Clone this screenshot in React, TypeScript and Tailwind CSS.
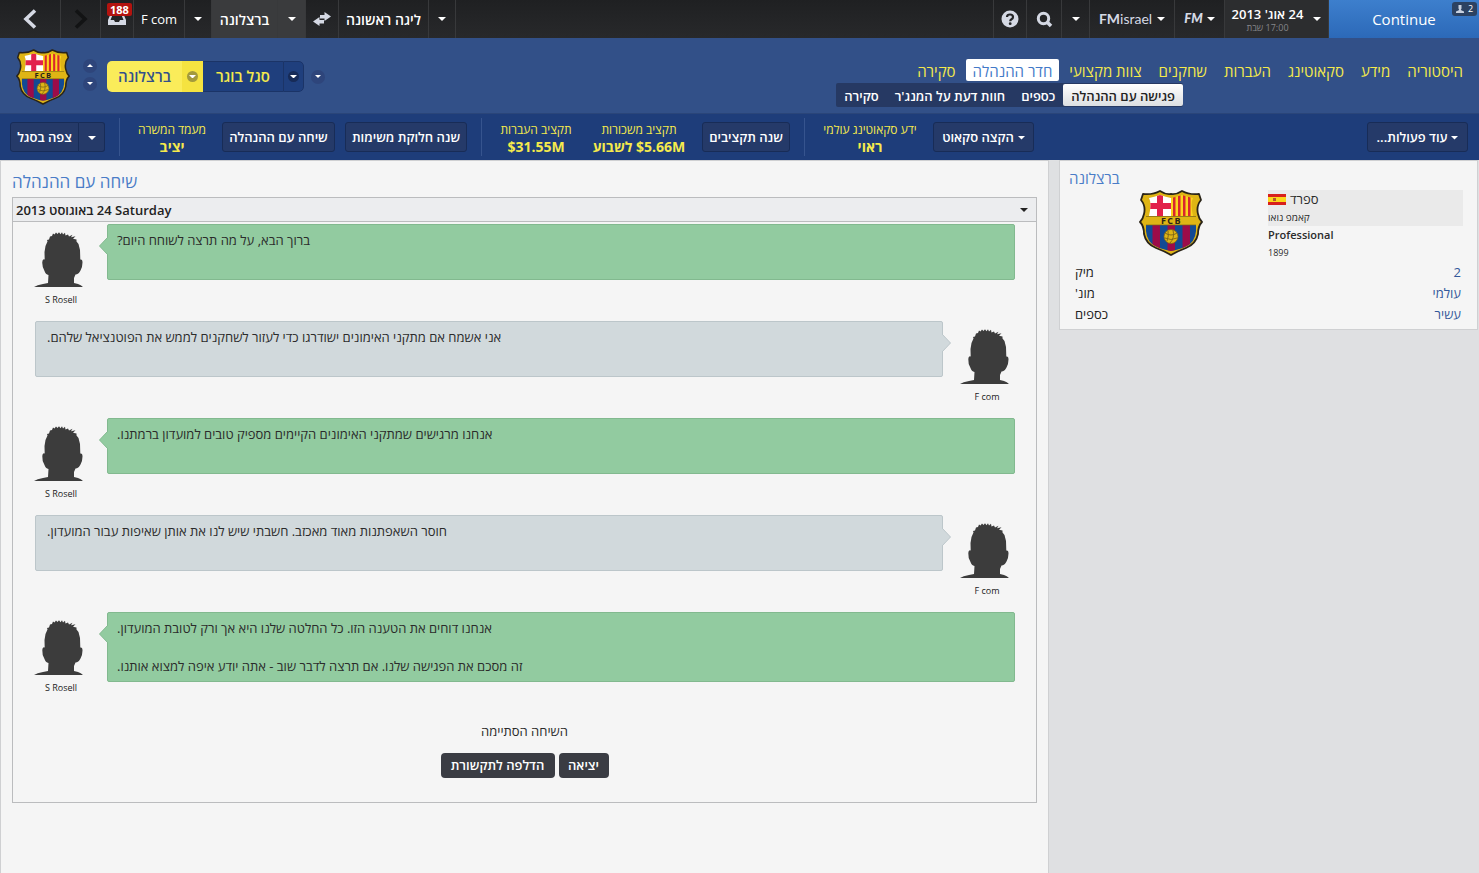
import type { ReactNode } from 'react';

type Speaker = 'rosell' | 'fcom';

interface Message {
  from: Speaker;
  lines: string[];
}

const MESSAGES: Message[] = [
  { from: 'rosell', lines: ['ברוך הבא, על מה תרצה לשוחח היום?'] },
  { from: 'fcom', lines: ['אני אשמח אם מתקני האימונים ישודרגו כדי לעזור לשחקנים לממש את הפוטנציאל שלהם.'] },
  { from: 'rosell', lines: ['אנחנו מרגישים שמתקני האימונים הקיימים מספיק טובים למועדון ברמתנו.'] },
  { from: 'fcom', lines: ['חוסר השאפתנות מאוד מאכזב. חשבתי שיש לנו את אותן שאיפות עבור המועדון.'] },
  {
    from: 'rosell',
    lines: [
      'אנחנו דוחים את הטענה הזו. כל החלטה שלנו היא אך ורק לטובת המועדון.',
      '',
      'זה מסכם את הפגישה שלנו. אם תרצה לדבר שוב - אתה יודע איפה למצוא אותנו.',
    ],
  },
];

const TABS = ['סקירה', 'חדר ההנהלה', 'צוות מקצועי', 'שחקנים', 'העברות', 'סקאוטינג', 'מידע', 'היסטוריה'];
const SUB_TABS = ['סקירה', 'חוות דעת על המנג\'ר', 'כספים', 'פגישה עם ההנהלה'];

const FACTS = [
  { label: 'מיק', value: '2' },
  { label: 'מונ\'', value: 'עולמי' },
  { label: 'כספים', value: 'עשיר' },
];

function Caret({ up = false, className = 'w-2' }: { up?: boolean; className?: string }) {
  return (
    <svg viewBox="0 0 8 4" className={className} fill="currentColor" aria-hidden="true">
      <path d={up ? 'M0 4L4 0L8 4Z' : 'M0 0H8L4 4Z'} />
    </svg>
  );
}

function Crest({ className }: { className: string }) {
  return (
    <svg viewBox="0 0 64 66" className={className} role="img" aria-label="FCB">
      <defs>
        <clipPath id="crest-top">
          <path d="M10 8Q15 7 21 5Q27 7 32 8Q37 7 43 5Q49 7 54 8Q51 13 54 26H10Q13 13 10 8Z" />
        </clipPath>
        <clipPath id="crest-bottom">
          <path d="M7 35H57Q58 48 51 54Q44 59 32 61Q20 59 13 54Q6 48 7 35Z" />
        </clipPath>
      </defs>
      <path
        d="M4 4Q14 5 21 1Q27 5 32 4Q37 5 43 1Q50 5 60 4L62 10Q57 16 59 24Q60 29 63 32Q59 36 59 44Q57 54 47 58Q39 61 32 65Q25 61 17 58Q7 54 5 44Q5 36 1 32Q4 29 5 24Q7 16 2 10Z"
        fill="#dfb515"
        stroke="#2a2418"
        strokeWidth="1.8"
        strokeLinejoin="round"
      />
      <g clipPath="url(#crest-top)">
        <path d="M8 3H32V26H8Z" fill="#fff" />
        <path d="M18 3H24V26H18ZM8 13H32V19H8Z" fill="#e2214b" />
        <path d="M32 3H56V26H32Z" fill="#fbd51d" />
        <path d="M34 3H36.500V26H34ZM39 3H41.500V26H39ZM44 3H46.500V26H44ZM49 3H51.500V26H49Z" fill="#d9262e" />
      </g>
      <g clipPath="url(#crest-bottom)">
        <path d="M5 35H59V62H5Z" fill="#124a94" />
        <path d="M13.500 35H21V62H13.500ZM28.500 35H36V62H28.500ZM43.500 35H51V62H43.500Z" fill="#9c0c49" />
      </g>
      <path d="M7 26.500H57M7 35H57" stroke="#7a6418" strokeWidth=".7" />
      <text x="32.500" y="34" textAnchor="middle" fontSize="9" fontWeight="700" letterSpacing="1.500" fill="#2a2418">
        FCB
      </text>
      <circle cx="32" cy="46.500" r="7" fill="#dfb515" stroke="#7a6418" strokeWidth=".8" />
      <path d="M26 43Q32 47 38 43M28 51Q30 46 29 41M31 53Q36 48 34 40M26 48Q32 51 38 48" fill="none" stroke="#7a6418" strokeWidth=".9" />
    </svg>
  );
}

function Silhouette() {
  return (
    <svg viewBox="0 0 55 55" className="h-[55px] w-[55px] shrink-0" fill="#3c3c3c" aria-hidden="true">
      <path d="M0 55Q3 53 9 52L14 51L14.500 43Q11.500 42.500 10.500 39Q8 35 8.300 30Q8.500 26.500 10.700 27.500L10.500 20L11.500 14L13.500 9.500L13 8L15 7.500L16 4.500L18 4L19 1.500L20.500 2.500L22 .5L23.500 2L25 .3L26.500 2.200L28 .2L29 2.500L31 .8L31.500 3.500L34 2.600L35 4.500L38.500 2.800L37 5.200L41.500 4.300L39 6.800L42.500 7.500L42.500 9.500L44.500 12L46 18L46.300 27.500Q48.500 27 48.500 30.500Q48.500 35 46.500 38.500Q44.500 42.500 41.500 42.500L40 46V51L44 52Q47 53 49 55Z" />
    </svg>
  );
}

function Spain() {
  return (
    <svg viewBox="0 0 18 11" className="h-[11px] w-[18px]" aria-hidden="true">
      <path d="M0 0H18V11H0Z" fill="#d8201c" />
      <path d="M0 3H18V8H0Z" fill="#fbd71c" />
      <path d="M5 4H8V7H5Z" fill="#b5562a" />
    </svg>
  );
}

function BarCell({ children, className, label }: { children: ReactNode; className: string; label?: string }) {
  return (
    <button
      type="button"
      aria-label={label}
      className={`flex h-full shrink-0 items-center justify-center border-r border-[#38393b] text-white ${className}`}
    >
      {children}
    </button>
  );
}

function ActionButton({ children, className = '', label }: { children: ReactNode; className?: string; label?: string }) {
  return (
    <button
      type="button"
      dir="rtl"
      aria-label={label}
      className={`flex h-[30px] shrink-0 items-center justify-center gap-1 rounded-[3px] border border-[#182c57] bg-[#253a69] pt-[2px] text-[13px] font-semibold whitespace-nowrap text-white ${className}`}
    >
      {children}
    </button>
  );
}

function Stat({ label, value, className }: { label: string; value: string; className: string }) {
  return (
    <dl dir="rtl" className={`flex shrink-0 flex-col pt-[2px] text-center whitespace-nowrap text-[#f5ea4c] ${className}`}>
      <dt className="text-[12px] leading-[17px]">{label}</dt>
      <dd className="text-[14px] leading-[18px] font-bold">{value}</dd>
    </dl>
  );
}

function Divider() {
  return <span className="mx-[14px] h-[38px] w-px shrink-0 bg-[#36548e]" />;
}

function TopBar() {
  return (
    <div className="flex h-[38px] bg-linear-to-b from-[#1f2022] to-[#28292b]">
      <BarCell label="Back" className="w-[61px]">
        <svg viewBox="0 0 14 20" className="h-5 w-[14px]" fill="none" stroke="#d5d9e4" strokeWidth="3.600" aria-hidden="true">
          <path d="M12 1.500L3 10L12 18.500" />
        </svg>
      </BarCell>
      <BarCell label="Forward" className="w-10">
        <svg viewBox="0 0 14 20" className="h-5 w-[14px]" fill="none" stroke="#121314" strokeWidth="3.600" aria-hidden="true">
          <path d="M2 1.500L11 10L2 18.500" />
        </svg>
      </BarCell>
      <BarCell label="Inbox" className="relative w-[33px]">
        <svg viewBox="0 0 18 12" className="h-3 w-[18px]" fill="#d5d9e4" aria-hidden="true">
          <path fillRule="evenodd" d="M3 0H15L18 7V12H0V7ZM4.500 2L2.500 7H6L7 9H11L12 7H15.500L13.500 2Z" />
        </svg>
        <span className="absolute top-[3px] left-[6px] rounded-[2px] bg-[#b3130f] px-[3px] text-[11px] leading-[13px] font-bold">
          188
        </span>
      </BarCell>
      <BarCell className="w-[51px] pt-px text-[13px] font-medium">F com</BarCell>
      <BarCell label="Manager menu" className="w-[27px]"><Caret /></BarCell>
      <BarCell className="w-[66px] bg-[#3a3b3d] pt-px text-[14px] font-semibold">ברצלונה</BarCell>
      <BarCell label="Club menu" className="w-[28px] bg-[#3a3b3d]"><Caret /></BarCell>
      <BarCell label="Switch" className="w-[33px]">
        <svg viewBox="0 0 18 14" className="h-[14px] w-[18px]" fill="#d5d9e4" aria-hidden="true">
          <path d="M11.500 0L18 4.500L11.500 9V6.500H7V3H11.500ZM6.500 5L0 9.500L6.500 14V11.500H11V8H6.500Z" />
        </svg>
      </BarCell>
      <BarCell className="w-[90px] pt-px text-[14px] font-semibold">ליגה ראשונה</BarCell>
      <BarCell label="League menu" className="w-[27px]"><Caret /></BarCell>

      <div className="ml-auto flex border-l border-[#38393b]">
        <BarCell label="Help" className="w-[33px]">
          <svg viewBox="0 0 18 18" className="h-[18px] w-[18px]" aria-hidden="true">
            <circle cx="9" cy="9" r="8.500" fill="#d5d9e4" />
            <path d="M6 7Q6 4.500 9 4.500Q12 4.500 12 7Q12 8.500 10.500 9.300Q9.200 10 9.200 11.300" fill="none" stroke="#232426" strokeWidth="2.200" />
            <circle cx="9.200" cy="13.700" r="1.400" fill="#232426" />
          </svg>
        </BarCell>
        <BarCell label="Search" className="w-[35px]">
          <svg viewBox="0 0 17 17" className="h-[17px] w-[17px]" fill="none" stroke="#d5d9e4" aria-hidden="true">
            <circle cx="7.500" cy="7.500" r="5.200" strokeWidth="3" />
            <path d="M10.500 10.500L15 15" strokeWidth="3.600" />
          </svg>
        </BarCell>
        <BarCell label="Search menu" className="w-7"><Caret /></BarCell>
        <BarCell className="w-[85px] gap-[5px]">
          <span className="font-[Lato] text-[14px] leading-[18px] text-[#d5d9e4]">
            <b>FM</b>israel
          </span>
          <Caret />
        </BarCell>
        <BarCell className="w-[50px] gap-1">
          <span className="font-[Lato] text-[13px] font-black text-[#d5d9e4] italic">FM</span>
          <Caret />
        </BarCell>
        <BarCell className="w-[104px] gap-[10px] bg-[#2c2d2f]">
          <span dir="rtl" className="flex flex-col items-center pt-[2px] whitespace-nowrap">
            <span className="text-[13px] leading-[16px] font-semibold">24 אוג' 2013</span>
            <span className="text-[9px] leading-[12px] text-[#85868a]">17:00 שבת</span>
          </span>
          <Caret />
        </BarCell>
        <button
          type="button"
          className="relative w-[150px] bg-linear-to-b from-[#3d7fcd] to-[#2c69b8] text-[15px] font-medium text-white"
        >
          Continue
          <span className="absolute top-[2px] right-[2px] flex h-[14px] w-[25px] items-center justify-center gap-1 rounded-[3px] bg-[#2c4262] text-[9px]">
            <svg viewBox="0 0 8 8" className="h-2 w-2" fill="#c9d2e0" aria-hidden="true">
              <path d="M2.500 0H5.500V3.500L4.800 5L8 6.500V8H0V6.500L3.200 5L2.500 3.500Z" />
            </svg>
            2
          </span>
        </button>
      </div>
    </div>
  );
}

function RoundCaret({ up = false, label }: { up?: boolean; label: string }) {
  return (
    <button type="button" aria-label={label} className="flex h-[14px] w-[14px] items-center justify-center rounded-full bg-[#2e457b] text-white">
      <Caret up={up} className="w-[6px]" />
    </button>
  );
}

function ClubHeader() {
  return (
    <div className="flex h-[75px] bg-[#325088]">
      <div className="flex h-full items-center pt-[2px] pl-4">
        <Crest className="h-[56px] w-[54px]" />
        <div className="ml-[13px] flex flex-col gap-1 pb-1">
          <RoundCaret up label="Previous club" />
          <RoundCaret label="Next club" />
        </div>
        <div className="mr-[7px] ml-[10px] flex h-[31px] overflow-hidden rounded-[5px] text-[15px] font-semibold">
          <button type="button" className="w-[75px] bg-[#faec5a] text-[#33508a]">ברצלונה</button>
          <button type="button" aria-label="Club list" className="flex w-[21px] items-center justify-center bg-[#f5e340] text-white">
            <span className="flex h-[11px] w-[11px] items-center justify-center rounded-full bg-[#a39a3c]">
              <Caret className="w-[7px]" />
            </span>
          </button>
          <button type="button" className="w-[80px] border border-r-0 border-l-0 border-[#1b3467] bg-[#1f3f7d] text-[#f5ea4c]">סגל בוגר</button>
          <button type="button" aria-label="Squad list" className="flex w-[21px] items-center justify-center rounded-r-[5px] border border-[#1b3467] bg-[#1f3f7d] text-white">
            <span className="flex h-[11px] w-[11px] items-center justify-center rounded-full bg-[#172b57]">
              <Caret className="w-[7px]" />
            </span>
          </button>
        </div>
        <RoundCaret label="More" />
      </div>

      <div className="ml-auto flex flex-col items-end pt-[21px]">
        <nav className="flex gap-[3px] pr-[9px]">
          {TABS.map((tab, i) => (
            <a
              key={tab}
              href="#"
              className={`rounded-[2px] px-[7px] pt-[2px] text-[15px] leading-[20px] whitespace-nowrap ${
                i === 1 ? 'bg-white text-[#4279c8]' : 'text-[#f5ea4c]'
              }`}
            >
              {tab}
            </a>
          ))}
        </nav>
        <nav className="mt-[2px] mr-[296px] flex rounded-[2px] bg-[#263963] py-px">
          {SUB_TABS.map((tab, i) => (
            <a
              key={tab}
              href="#"
              dir="rtl"
              className={`rounded-[2px] px-2 pt-[2px] text-[13px] leading-[20px] font-semibold whitespace-nowrap ${
                i === 3 ? 'bg-linear-to-b from-white to-[#dcdfe2] text-[#222]' : 'text-white'
              }`}
            >
              {tab}
            </a>
          ))}
        </nav>
      </div>
    </div>
  );
}

function ActionBar() {
  return (
    <div className="flex h-[47px] items-center border-t border-[#2a4579] bg-[#1e3d7a] pr-[11px] pl-[10px]">
      <div className="flex">
        <ActionButton className="w-[69px] rounded-r-none">צפה בסגל</ActionButton>
        <ActionButton label="Squad menu" className="w-[26px] rounded-l-none border-l-0"><Caret /></ActionButton>
      </div>
      <Divider />
      <Stat className="w-[76px]" label="מעמד המשרה" value="יציב" />
      <ActionButton className="ml-3 w-[113px]">שיחה עם ההנהלה</ActionButton>
      <ActionButton className="ml-[10px] w-[122px]">שנה חלוקת משימות</ActionButton>
      <Divider />
      <Stat className="w-[80px]" label="תקציב העברות" value="$31.55M" />
      <Stat className="ml-3 w-[102px]" label="תקציב משכורות" value="$5.66M לשבוע" />
      <ActionButton className="ml-3 w-[88px]">שנה תקציבים</ActionButton>
      <Divider />
      <Stat className="w-[102px]" label="ידע סקאוטינג עולמי" value="ראוי" />
      <ActionButton className="ml-3 w-[101px]"><Caret className="w-[7px]" />הקצה סקאוט</ActionButton>
      <ActionButton className="ml-auto w-[101px]"><Caret className="w-[7px]" />עוד פעולות...</ActionButton>
    </div>
  );
}

function Bubble({ message }: { message: Message }) {
  const mine = message.from === 'fcom';
  return (
    <li className={`flex min-h-[97px] ${mine ? 'flex-row-reverse' : ''}`}>
      <div className={`flex w-[72px] shrink-0 flex-col items-center pt-2 ${mine ? 'pl-4' : 'pr-5'}`}>
        <Silhouette />
        <span className="mt-[5px] text-[9px] leading-4 text-[#222]">{mine ? 'F com' : 'S Rosell'}</span>
      </div>
      <div
        className={`relative min-h-[56px] flex-1 self-start rounded-[2px] border px-[9px] pt-[6px] pb-[5px] text-[13px] leading-[19px] text-[#2b2b2b] ${
          mine ? 'border-[#bcc6ca] bg-[#d1d9dc] pl-[11px]' : 'border-[#82b98f] bg-[#92cba0]'
        }`}
      >
        <svg
          viewBox="0 0 9 18"
          className={`absolute top-[12px] h-[18px] w-[9px] ${mine ? '-right-[9px]' : '-left-[9px] -scale-x-100'}`}
          aria-hidden="true"
        >
          <path d="M0 0L8.500 9L0 18" fill={mine ? '#d1d9dc' : '#92cba0'} stroke={mine ? '#bcc6ca' : '#82b98f'} />
        </svg>
        {message.lines.map((line, i) => (
          <p key={i} dir="rtl" className="min-h-[19px] text-left">{line}</p>
        ))}
      </div>
    </li>
  );
}

function Conversation() {
  return (
    <main className="min-w-0 flex-1 border border-[#cfd0d2] bg-[#f5f5f5] px-[11px] pb-[70px]">
      <h1 className="pt-2 pb-[2px] text-[17px] leading-[26px] text-[#4a7cc7]">שיחה עם ההנהלה</h1>
      <section className="border border-[#bbbcbe]">
        <div className="relative border-b border-[#bbbcbe] bg-[#ecedef]">
          {/* the isolates keep the weekday ahead of the day number */}
          <select
            aria-label="תאריך השיחה"
            className="block h-[23px] w-full appearance-none px-[3px] pt-[2px] text-left text-[13px] font-semibold text-[#222]"
          >
            <option>{'\u2067\u2068Saturday\u2069 24 באוגוסט 2013\u2069'}</option>
          </select>
          <Caret className="pointer-events-none absolute top-[10px] right-2 w-2 text-[#222]" />
        </div>
        <ul className="pt-[2px] pr-[21px] pl-[22px]">
          {MESSAGES.map((message, i) => (
            <Bubble key={i} message={message} />
          ))}
        </ul>
        <div className="flex flex-col items-center pt-3 pb-6">
          <p className="text-[13px] leading-5 text-[#2b2b2b]">השיחה הסתיימה</p>
          <div className="mt-3 flex gap-1 text-[13px] font-semibold text-white">
            <button type="button" className="h-[25px] w-[114px] rounded-[4px] bg-[#3a3c43]">הדלפה לתקשורת</button>
            <button type="button" className="h-[25px] w-[50px] rounded-[4px] bg-[#3a3c43]">יציאה</button>
          </div>
        </div>
      </section>
    </main>
  );
}

function ClubCard() {
  return (
    <aside className="mr-px w-[419px] shrink-0 self-start border border-[#cfd0d2] bg-[#f5f5f5] pt-[7px] pr-[14px] pb-1 pl-[9px]">
      <h2 className="pb-px text-[15px] leading-[21px] text-[#4a7cc7]">ברצלונה</h2>
      <div className="grid grid-cols-2 pl-1 text-[#2b2b2b]">
        <div className="flex justify-center">
          <Crest className="h-[66px] w-[64px]" />
        </div>
        <div className="text-[9px] leading-[18px]">
          <div className="bg-[#eaeaea]">
            <p className="flex items-center gap-1 text-[13px] leading-[18px]"><Spain />ספרד</p>
            <p className="text-[10px]">קאמפ נואו</p>
          </div>
          <p className="text-[11px] font-semibold">Professional</p>
          <p>1899</p>
        </div>
      </div>
      <table className="w-full text-[13px] leading-[21px]">
        <tbody>
          {FACTS.map(fact => (
            <tr key={fact.label}>
              <th scope="row" dir="rtl" className="pr-0 pl-[6px] text-left font-normal text-[#222]">{fact.label}</th>
              <td className="pr-[2px] text-right text-[#33589a]">{fact.value}</td>
            </tr>
          ))}
        </tbody>
      </table>
    </aside>
  );
}

export default function App() {
  return (
    <div className="flex min-h-screen flex-col bg-[#dfe0e2] font-['Open_Sans','Noto_Sans',sans-serif]">
      <header>
        <TopBar />
        <ClubHeader />
        <ActionBar />
      </header>
      <div className="flex flex-1 gap-[10px]">
        <Conversation />
        <ClubCard />
      </div>
    </div>
  );
}
